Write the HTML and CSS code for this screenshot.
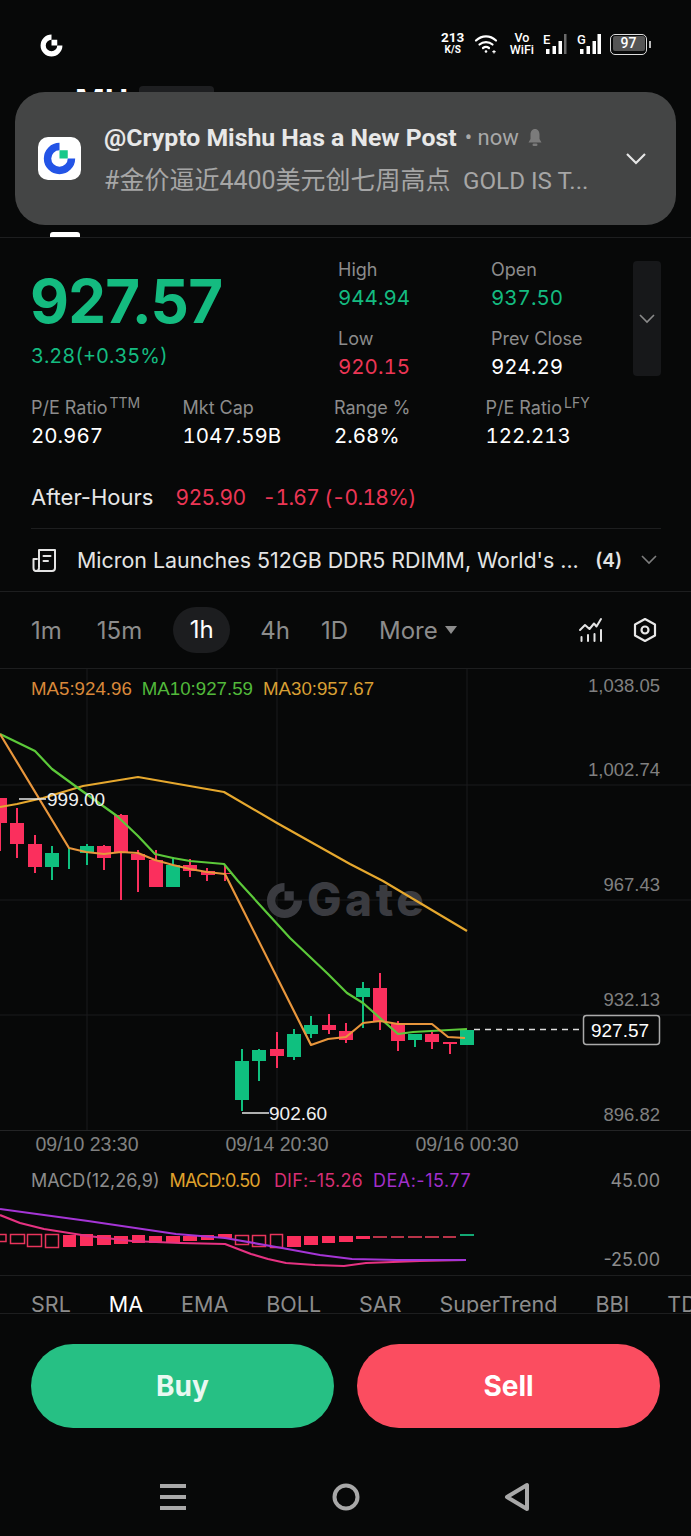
FILE: index.html
```html
<!DOCTYPE html>
<html lang="en">
<head>
    <meta charset="UTF-8">
    <meta name="viewport" content="width=device-width, initial-scale=1.0">
    <title>MU - Quote</title>
    <link rel="stylesheet" href="styles.css">
</head>
<body>

<svg class="defs" width="0" height="0">
    <symbol id="gate-mark" viewBox="0 0 40 40">
        <path d="M20 1A19 19 0 1 0 39 20H30A10 10 0 1 1 20 10Z"/>
        <rect class="gate-dot" x="20" y="10" width="10" height="10"/>
    </symbol>
</svg>

<div class="phone">

    <!-- status bar -->
    <div class="status">
        <svg class="status-logo"><use href="#gate-mark"/></svg>
        <div class="status-right">
            <div class="speed"><b>213</b><span>K/S</span></div>
            <svg class="wifi" width="24" height="20" viewBox="0 0 24 20" fill="none" stroke="#fff" stroke-width="2.2" stroke-linecap="round">
                <path d="M2 6.5C8 1 16 1 22 6.5"/>
                <path d="M5.5 10.5C9 7.3 15 7.3 18.500 10.500"/>
                <path d="M9 14C10.800 12.700 13.200 12.700 15 14"/>
                <circle cx="12" cy="17.500" r="1.300" fill="#fff" stroke="none"/>
                <path d="M20 16.500v2.500M18.800 17.700h2.400" stroke-width="1.200"/>
            </svg>
            <div class="vowifi"><span>Vo</span><span>WiFi</span></div>
            <div class="sim">
                <span>E</span>
                <svg width="21" height="20" viewBox="0 0 21 20" fill="#fff">
                    <rect x="0" y="15" width="3.500" height="5"/><rect x="6.500" y="12" width="3.500" height="8"/><rect x="12.500" y="7" width="3.500" height="13"/><rect x="18" y="0" width="2.500" height="20" fill="#6a6a6a"/>
                </svg>
            </div>
            <div class="sim sim-g">
                <span>G</span>
                <svg width="21" height="20" viewBox="0 0 21 20" fill="#fff">
                    <rect x="0" y="15" width="3.500" height="5"/><rect x="6.500" y="12" width="3.500" height="8"/><rect x="12.500" y="7" width="3.500" height="13"/><rect x="17.500" y="0" width="3.500" height="20"/>
                </svg>
            </div>
            <div class="battery"><span>97</span></div>
            <div class="battery-tip"></div>
        </div>
    </div>

    <!-- page header, mostly behind the notification -->
    <div class="header">
        <div class="header-row">
            <span class="ticker">MU</span>
            <span class="ticker-tag"></span>
        </div>
        <div class="tab-mark"></div>
    </div>

    <div class="notice">
        <div class="notice-icon"><svg class="notice-logo"><use href="#gate-mark"/></svg></div>
        <div class="notice-body">
            <div class="notice-title">
                <b>@Crypto Mishu Has a New Post</b>
                <span>• now</span>
                <svg width="16" height="19" viewBox="0 0 16 19" fill="#7b7b7b">
                    <path d="M8 1C5 1 3.500 3.500 3.500 6.500V11L1.500 14.500H14.500L12.500 11V6.500C12.500 3.500 11 1 8 1Z"/>
                    <rect x="5.500" y="15.500" width="5" height="2.500" rx="1.200"/>
                </svg>
            </div>
            <div class="notice-text">#金价逼近4400美元创七周高点&nbsp; <span class="notice-latin">GOLD IS T...</span></div>
        </div>
        <svg class="notice-arrow" width="20" height="12" viewBox="0 0 20 12" fill="none" stroke="#e6e6e6" stroke-width="2.200">
            <path d="M1 1L10 10L19 1"/>
        </svg>
    </div>

    <!-- quote -->
    <div class="quote">
        <div class="quote-top">
            <div class="quote-price">
                <div class="last">927.57</div>
                <div class="change">3.28(+0.35%)</div>
            </div>
            <div class="quote-grid">
                <div class="cell"><label>High</label><span class="up">944.94</span></div>
                <div class="cell"><label>Open</label><span class="up">937.50</span></div>
                <div class="cell"><label>Low</label><span class="down">920.15</span></div>
                <div class="cell"><label>Prev Close</label><span>924.29</span></div>
            </div>
            <div class="quote-more">
                <svg width="16" height="10" viewBox="0 0 16 10" fill="none" stroke="#8a8a8a" stroke-width="1.600"><path d="M1 1L8 8L15 1"/></svg>
            </div>
        </div>
        <div class="stats">
            <div class="cell"><label>P/E Ratio<sup>TTM</sup></label><span>20.967</span></div>
            <div class="cell"><label>Mkt Cap</label><span>1047.59B</span></div>
            <div class="cell"><label>Range %</label><span>2.68%</span></div>
            <div class="cell"><label>P/E Ratio<sup>LFY</sup></label><span>122.213</span></div>
        </div>
        <div class="after">
            <span class="after-label">After-Hours</span>
            <span class="down">925.90</span>
            <span class="down after-change">-1.67 (-0.18%)</span>
        </div>
    </div>

    <div class="news">
        <svg width="26" height="26" viewBox="0 0 26 26" fill="none" stroke="#e4e4e4" stroke-width="2" stroke-linejoin="round" stroke-linecap="round">
            <path d="M7 20V3H23V21C23 23 22 24 20 24H4C2 24 1.500 22.500 1.500 21V12H5"/>
            <path d="M7 21C7 23 6 24 4 24"/>
            <path d="M11.500 9H18.500M11.500 14H16"/>
        </svg>
        <span class="news-text">Micron Launches 512GB DDR5 RDIMM, World's ...</span>
        <span class="news-count">(4)</span>
        <svg width="16" height="10" viewBox="0 0 16 10" fill="none" stroke="#7d7d7d" stroke-width="1.600"><path d="M1 1L8 8L15 1"/></svg>
    </div>

    <!-- timeframes -->
    <div class="periods">
        <span class="period">1m</span>
        <span class="period">15m</span>
        <span class="period period-on">1h</span>
        <span class="period">4h</span>
        <span class="period">1D</span>
        <span class="period period-more">More<i class="caret"></i></span>
        <div class="period-tools">
            <svg width="26" height="26" viewBox="0 0 26 26" fill="none" stroke="#e4e4e4" stroke-width="2" stroke-linecap="round" stroke-linejoin="round">
                <path d="M2 13L7 8L11.500 12L16 6.500L18.500 9.500L23 2"/>
                <path d="M3.500 20V24M10 18V24M16.500 17V24M23 13V24"/>
            </svg>
            <svg width="24" height="26" viewBox="0 0 24 26" fill="none" stroke="#e8e8e8" stroke-width="2.200" stroke-linejoin="round">
                <path d="M12 2L22 7.500V18.500L12 24L2 18.500V7.500Z"/>
                <circle cx="12" cy="13" r="3.500"/>
            </svg>
        </div>
    </div>

    <!-- main chart -->
    <svg class="chart" width="691" height="492" viewBox="0 668 691 492">
        <g class="grid">
            <path d="M0 784H691M0 899H691M0 1014H691M87 668V1129M277 668V1129M467 668V1129"/>
            <path class="grid-base" d="M0 1129.500H691"/>
        </g>

        <g class="mark-faded">
            <use href="#gate-mark" x="266" y="881" width="37" height="37"/>
            <text x="307" y="915" class="mark-word">Gate</text>
        </g>

        <g class="candle-down">
            <rect x="0" y="797" width="7" height="25"/><rect x="-1" y="797" width="2" height="53"/>
            <rect x="10" y="822" width="14" height="21"/><rect x="16" y="807" width="2" height="50"/>
            <rect x="28" y="843" width="14" height="23"/><rect x="34" y="834" width="2" height="38"/>
            <rect x="97" y="845" width="14" height="12"/><rect x="103" y="844" width="2" height="25"/>
            <rect x="114" y="814" width="14" height="38"/><rect x="120" y="813" width="2" height="86"/>
            <rect x="131" y="853" width="14" height="6"/><rect x="137" y="849" width="2" height="42"/>
            <rect x="149" y="859" width="14" height="27"/><rect x="155" y="849" width="2" height="37"/>
            <rect x="183" y="864" width="14" height="6"/><rect x="189" y="858" width="2" height="18"/>
            <rect x="201" y="870" width="14" height="4"/><rect x="206" y="867" width="2" height="13"/>
            <rect x="218" y="872" width="14" height="1"/><rect x="224" y="865" width="2" height="15"/>
            <rect x="270" y="1048" width="14" height="7"/><rect x="276" y="1031" width="2" height="36"/>
            <rect x="322" y="1024" width="14" height="5"/><rect x="328" y="1013" width="2" height="20"/>
            <rect x="339" y="1030" width="14" height="9"/><rect x="345" y="1022" width="2" height="20"/>
            <rect x="373" y="987" width="14" height="34"/><rect x="379" y="972" width="2" height="57"/>
            <rect x="391" y="1023" width="14" height="17"/><rect x="397" y="1020" width="2" height="30"/>
            <rect x="425" y="1033" width="14" height="8"/><rect x="431" y="1031" width="2" height="17"/>
            <rect x="443" y="1041" width="14" height="2"/><rect x="449" y="1041" width="2" height="12"/>
        </g>
        <g class="candle-up">
            <rect x="45" y="852" width="14" height="14"/><rect x="51" y="845" width="2" height="34"/>
            <rect x="68" y="847" width="2" height="21"/>
            <rect x="80" y="845" width="14" height="7"/><rect x="86" y="843" width="2" height="21"/>
            <rect x="166" y="864" width="14" height="22"/><rect x="172" y="856" width="2" height="30"/>
            <rect x="235" y="1060" width="14" height="39"/><rect x="241" y="1048" width="2" height="62"/>
            <rect x="252" y="1049" width="14" height="11"/><rect x="258" y="1048" width="2" height="32"/>
            <rect x="287" y="1033" width="14" height="23"/><rect x="293" y="1028" width="2" height="31"/>
            <rect x="304" y="1024" width="14" height="9"/><rect x="310" y="1015" width="2" height="22"/>
            <rect x="356" y="987" width="14" height="9"/><rect x="362" y="981" width="2" height="46"/>
            <rect x="408" y="1033" width="14" height="6"/><rect x="414" y="1033" width="2" height="13"/>
            <rect x="460" y="1029" width="14" height="15"/>
        </g>

        <polyline class="ma30" points="0,806 17,803 43,797 83,785 138,776 224,791 277,822 350,863 383,880 467,930"/>
        <polyline class="ma10" points="0,733 35,750 52,768 78,787 117,815 138,835 155,853 173,857 190,860 224,863 238,880 290,937 328,973 347,992 363,1002 398,1033 413,1031 467,1028"/>
        <polyline class="ma5" points="0,733 69,847 86,851 104,853 121,851 138,852 155,859 173,864 190,868 207,871 225,873 311,1044 328,1038 346,1036 363,1022 380,1020 398,1023 432,1023 448,1036 465,1037"/>

        <path class="note-line" d="M19 798H46M242 1112H269"/>
        <text x="47" y="805" class="note">999.00</text>
        <text x="269" y="1119" class="note">902.60</text>

        <path class="last-line" d="M474 1028.500H583"/>
        <rect class="last-box" x="583.500" y="1014.500" width="76" height="29" rx="3"/>
        <text x="620" y="1036" class="last-text">927.57</text>

        <text x="31" y="694" class="legend"><tspan class="c-ma5">MA5:924.96</tspan><tspan class="c-ma10" dx="10">MA10:927.59</tspan><tspan class="c-ma30" dx="10">MA30:957.67</tspan></text>

        <g class="axis">
            <text x="660" y="691">1,038.05</text>
            <text x="660" y="775">1,002.74</text>
            <text x="660" y="890">967.43</text>
            <text x="660" y="1005">932.13</text>
            <text x="660" y="1120">896.82</text>
        </g>
        <g class="dates">
            <text x="87" y="1150">09/10 23:30</text>
            <text x="277" y="1150">09/14 20:30</text>
            <text x="467" y="1150">09/16 00:30</text>
        </g>
    </svg>

    <!-- macd pane -->
    <div class="macd">
        <div class="macd-head">
            <span class="macd-name">MACD(12,26,9)</span>
            <span class="c-macd">MACD:0.50</span>
            <span class="c-dif">DIF:-15.26</span>
            <span class="c-dea">DEA:-15.77</span>
            <span class="macd-top">45.00</span>
        </div>
        <svg class="macd-plot" width="691" height="115" viewBox="0 1160 691 115">
            <g class="bar-hollow">
                <rect x="-7" y="1233.500" width="13" height="7"/>
                <rect x="10.500" y="1233.500" width="14" height="9"/>
                <rect x="27.500" y="1233.500" width="14" height="12"/>
                <rect x="45.500" y="1233.500" width="13" height="13"/>
                <rect x="235.500" y="1234.500" width="13" height="9"/>
                <rect x="252.500" y="1234.500" width="13" height="11"/>
                <rect x="270.500" y="1233.500" width="12" height="13"/>
            </g>
            <g class="bar-solid">
                <rect x="63" y="1234" width="13" height="12"/>
                <rect x="80" y="1233" width="13" height="12"/>
                <rect x="97" y="1234" width="14" height="10"/>
                <rect x="114" y="1235" width="14" height="8"/>
                <rect x="132" y="1234" width="13" height="8"/>
                <rect x="149" y="1235" width="13" height="7"/>
                <rect x="166" y="1235" width="14" height="6"/>
                <rect x="183" y="1235" width="14" height="5"/>
                <rect x="201" y="1234" width="13" height="5"/>
                <rect x="218" y="1233" width="14" height="4"/>
                <rect x="287" y="1235" width="14" height="11"/>
                <rect x="304" y="1235" width="14" height="9"/>
                <rect x="322" y="1235" width="13" height="7"/>
                <rect x="339" y="1235" width="14" height="6"/>
                <rect x="356" y="1235" width="14" height="3"/>
            </g>
            <g class="bar-thin">
                <rect x="373" y="1235" width="14" height="2"/>
                <rect x="391" y="1235" width="13" height="2"/>
                <rect x="408" y="1235" width="14" height="2"/>
                <rect x="425" y="1235" width="14" height="2"/>
                <rect x="443" y="1235" width="13" height="2"/>
            </g>
            <rect class="bar-last" x="460" y="1233" width="14" height="2"/>
            <polyline class="dif" points="0,1214 20,1222 44,1228 88,1235 132,1240 180,1242 225,1243 238,1248 251,1253 268,1258 286,1262 315,1264 344,1265 366,1262 420,1260 466,1259"/>
            <polyline class="dea" points="0,1208 88,1220 176,1233 225,1237 282,1247 320,1254 352,1258 397,1259 466,1259"/>
            <text x="660" y="1265" class="macd-low">-25.00</text>
        </svg>
    </div>

    <div class="indicators">
        <span>SRL</span>
        <span class="ind-on">MA</span>
        <span>EMA</span>
        <span>BOLL</span>
        <span>SAR</span>
        <span>SuperTrend</span>
        <span>BBI</span>
        <span>TD</span>
    </div>

    <div class="trade">
        <button class="btn btn-buy">Buy</button>
        <button class="btn btn-sell">Sell</button>
    </div>

    <div class="navbar">
        <svg width="28" height="28" viewBox="0 0 28 28" fill="#a8a8a8">
            <rect x="1" y="1" width="26" height="4"/><rect x="1" y="12" width="26" height="4"/><rect x="1" y="23" width="26" height="4"/>
        </svg>
        <svg width="28" height="28" viewBox="0 0 28 28" fill="none" stroke="#a8a8a8" stroke-width="4">
            <circle cx="14" cy="14" r="11.500"/>
        </svg>
        <svg width="26" height="30" viewBox="0 0 26 30" fill="none" stroke="#a8a8a8" stroke-width="4" stroke-linejoin="round">
            <path d="M3 15L23 3V27Z"/>
        </svg>
    </div>

</div>

</body>
</html>
```

FILE: styles.css
```css
/* base */
:root {
    --bg: #070808;
    --green: #14bb80;
    --red: #ec3655;
    --grey: #8c8c8c;
    --line: #1d1e1f;
}

* { box-sizing: border-box; }

body {
    margin: 0;
    background: var(--bg);
    color: #fff;
    font-family: Inter, sans-serif;
}

.defs { position: absolute; }
.gate-dot { fill: var(--dot, currentColor); }

.phone {
    position: relative;
    width: 691px;
    height: 1536px;
    overflow: hidden;
}

.up { color: var(--green); }
.down { color: var(--red); }

/* status bar */
.status {
    height: 86px;
    padding: 29px 40px 0;
    display: flex;
    justify-content: space-between;
    align-items: flex-start;
}

.status-logo {
    width: 23px;
    height: 23px;
    margin-top: 5px;
    fill: #fff;
    --dot: #fff;
}

.status-right {
    display: flex;
    align-items: center;
    height: 30px;
    font-family: Roboto, sans-serif;
    color: #fff;
}

.speed {
    display: flex;
    flex-direction: column;
    align-items: center;
    width: 24px;
    margin-top: -3px;
    font-size: 13.500px;
}
.speed b { font-weight: 700; line-height: 13px; }
.speed span { font-size: 10px; font-weight: 700; line-height: 11px; }

.wifi { margin-left: 9px; }

.vowifi {
    display: flex;
    flex-direction: column;
    margin-left: 12px;
    font-size: 12.500px;
    font-weight: 500;
    line-height: 12px;
    text-align: center;
}

.sim {
    display: flex;
    align-items: flex-start;
    margin-left: 9px;
    font-size: 13px;
    font-weight: 500;
    line-height: 12px;
}
.sim span { width: 3px; }
.sim svg { display: block; }
.sim-g { margin-left: 10px; }

.battery {
    margin-left: 9px;
    width: 37px;
    height: 21px;
    border: 1.500px solid #ddd;
    border-radius: 5px;
    padding: 1.500px;
}
.battery span {
    display: block;
    height: 15px;
    background: #555;
    border-radius: 2px;
    font-size: 14px;
    line-height: 15px;
    text-align: center;
    font-weight: 500;
}
.battery-tip {
    width: 2px;
    height: 7px;
    margin-left: 2px;
    background: #bbb;
}

/* header behind the notification */
.header {
    height: 152px;
    border-bottom: 1px solid var(--line);
    display: flex;
    flex-direction: column;
    justify-content: space-between;
}

.header-row {
    display: flex;
    gap: 11px;
    padding-left: 75px;
}

.ticker {
    font-size: 32px;
    font-weight: 700;
    line-height: 31px;
}

.ticker-tag {
    width: 75px;
    height: 30px;
    background: #1e1f21;
    border-radius: 4px;
}

.tab-mark {
    width: 30px;
    height: 5px;
    margin-left: 50px;
    background: #fff;
    border-radius: 3px 3px 0 0;
}

/* notification */
.notice {
    position: absolute;
    left: 15px;
    top: 92px;
    width: 661px;
    height: 133px;
    background: #444545;
    border-radius: 30px;
    display: flex;
    align-items: center;
    padding: 0 30px 0 23px;
}

.notice-icon {
    width: 43px;
    height: 43px;
    background: #fff;
    border-radius: 10px;
    display: flex;
    align-items: center;
    justify-content: center;
    flex-shrink: 0;
}

.notice-logo {
    width: 33px;
    height: 33px;
    fill: #2354e6;
    --dot: #17c88b;
}

.notice-body {
    flex: 1;
    margin-left: 23px;
    font-family: Roboto, "Noto Sans CJK SC", sans-serif;
}

.notice-title {
    display: flex;
    align-items: center;
    gap: 8px;
    height: 38px;
}
.notice-title b {
    font-size: 24.800px;
    font-weight: 700;
    color: #e8e8e8;
}
.notice-title span {
    font-size: 22px;
    color: #a8a8a8;
}

.notice-text {
    margin-top: 6px;
    font-size: 25px;
    line-height: 36px;
    color: #a6a6a6;
    white-space: nowrap;
}
.notice-latin { font-size: 24.200px; }

/* quote block */
.quote {
    padding: 0 30px 0 31px;
}

.quote-top {
    display: flex;
    height: 139px;
    padding-top: 21px;
}

.quote-price {
    width: 307px;
}

.last {
    font-size: 60px;
    font-weight: 700;
    line-height: 72px;
    letter-spacing: -0.800px;
    color: var(--green);
    margin: 6px 0 0 -1px;
}

.change {
    margin-top: 6px;
    font-size: 20px;
    line-height: 26px;
    color: var(--green);
    font-variant-numeric: tabular-nums;
}

.quote-grid {
    display: grid;
    grid-template-columns: 153px 142px;
    grid-auto-rows: 69px;
}

.cell {
    display: flex;
    flex-direction: column;
}

.cell label {
    font-size: 18px;
    line-height: 22px;
    color: var(--grey);
}

.cell span {
    margin-top: 4px;
    font-size: 20.500px;
    line-height: 26px;
    font-variant-numeric: tabular-nums;
}

.quote-more {
    width: 28px;
    height: 115px;
    margin-top: 2px;
    background: #17181a;
    border-radius: 4px;
    display: flex;
    align-items: center;
    justify-content: center;
}

.stats {
    display: grid;
    grid-template-columns: repeat(4, 151.500px);
    height: 85px;
    padding-top: 20px;
}

.stats sup {
    font-size: 14px;
    line-height: 0;
    margin-left: 2px;
    vertical-align: 6px;
}

.after {
    display: flex;
    align-items: center;
    gap: 16.500px;
    height: 67px;
    padding-top: 4px;
    border-bottom: 1px solid var(--line);
    font-size: 21px;
}
.after-label { margin-right: 6px; font-size: 22px; color: #e6e6e6; }
.after-change { font-variant-numeric: tabular-nums; letter-spacing: -0.700px; }

/* news line */
.news {
    height: 63px;
    padding: 0 34px 0 32px;
    display: flex;
    align-items: center;
    border-bottom: 1px solid var(--line);
}

.news-text {
    flex: 1;
    margin-left: 19px;
    font-size: 21.400px;
    color: #e4e4e4;
    white-space: nowrap;
}

.news-count {
    margin-right: 19px;
    font-size: 19px;
    font-weight: 600;
    color: #e4e4e4;
}

/* timeframes */
.periods {
    height: 77px;
    padding: 0 31px;
    display: flex;
    align-items: center;
    border-bottom: 1px solid var(--line);
}

.period {
    font-size: 24px;
    color: var(--grey);
    margin-right: 31px;
}
.period:first-child { margin-right: 35px; }

.period-on {
    width: 57px;
    height: 46px;
    margin: 0 30px 0 0;
    background: #1c1d1f;
    border-radius: 23px;
    color: #fff;
    line-height: 46px;
    text-align: center;
}

.period-more {
    display: flex;
    align-items: center;
    margin: 0;
}

.caret {
    margin-left: 7px;
    border-left: 6px solid transparent;
    border-right: 6px solid transparent;
    border-top: 8px solid var(--grey);
}

.period-tools {
    margin-left: auto;
    display: flex;
    align-items: center;
    gap: 29px;
    padding-right: 3px;
}

/* chart */
.chart {
    display: block;
    font-family: "Liberation Sans", sans-serif;
}

.grid path { stroke: #1a1b1c; stroke-width: 1; fill: none; }
.grid .grid-base { stroke: #232425; }

.mark-faded { fill: #3a3b40; --dot: #3a3b40; }
.mark-word { font-family: Inter, sans-serif; font-size: 46px; font-weight: 800; letter-spacing: 3.500px; }

.candle-down { fill: #fb2f5d; }
.candle-up { fill: #0fc07f; }

.chart polyline, .macd-plot polyline { fill: none; stroke-width: 2.200; stroke-linejoin: round; }
.ma5 { stroke: #e8963c; }
.ma10 { stroke: #5cc93a; }
.ma30 { stroke: #e6a82e; }

.note-line { stroke: #e6e6e6; stroke-width: 1.500; fill: none; }
.note { font-size: 19px; fill: #f0f0f0; }

.last-line { stroke: #ddd; stroke-width: 1.500; stroke-dasharray: 6 5; }
.last-box { fill: var(--bg); stroke: #aaa; stroke-width: 1.500; }
.last-text { font-size: 19px; fill: #fff; text-anchor: middle; }

.legend { font-size: 18.700px; }
.c-ma5 { fill: #d9883a; }
.c-ma10 { fill: #52b93b; }
.c-ma30 { fill: #d89f34; }

.axis text { font-size: 18.500px; fill: #808080; text-anchor: end; }
.dates text { font-size: 19.500px; fill: #808080; text-anchor: middle; }

/* macd */
.macd {
    position: relative;
    height: 115px;
    border-bottom: 1px solid var(--line);
}

.macd-head {
    position: absolute;
    left: 31px;
    right: 31px;
    top: 9px;
    display: flex;
    gap: 10px;
    font-size: 18px;
    line-height: 22px;
}
.macd-name { color: var(--grey); }
.c-macd { color: #e0a22c; letter-spacing: -0.800px; }
.c-dif { margin-left: 4px; color: #d62f74; letter-spacing: 0.200px; }
.c-dea { color: #a12fcb; letter-spacing: 0.500px; }
.macd-top { margin-left: auto; color: var(--grey); }

.macd-plot { display: block; font-family: Inter, sans-serif; }
.macd-low { font-size: 18px; fill: var(--grey); text-anchor: end; }

.bar-hollow { fill: none; stroke: #e8345c; stroke-width: 1.500; }
.bar-solid { fill: #fb2f5d; }
.bar-thin { fill: #b83348; }
.bar-last { fill: #12a873; }
.dif { stroke: #e63282; }
.dea { stroke: #a535d6; stroke-width: 2.500; }

/* indicators */
.indicators {
    height: 44px;
    padding: 15px 0 0 31px;
    display: flex;
    gap: 38px;
    overflow-x: clip;
    font-size: 21.500px;
    line-height: 26px;
    color: var(--grey);
    white-space: nowrap;
}
.ind-on { color: #fff; }

/* buy sell - the top edge sits over the foot of the row above */
.trade {
    position: relative;
    display: flex;
    gap: 23px;
    margin-top: -7px;
    padding: 30px 31px 0;
    border-top: 1px solid var(--line);
    background: var(--bg);
}

.btn {
    flex: 1;
    height: 84px;
    border: 0;
    border-radius: 42px;
    color: #fff;
    font-family: Inter, sans-serif;
    font-size: 28px;
    font-weight: 700;
}
.btn-buy { background: #26c084; color: #e9f8f1; }
.btn-sell { background: #fb4d60; }

/* android nav */
.navbar {
    margin-top: 54px;
    padding: 0 161px 0 159px;
    display: flex;
    justify-content: space-between;
    align-items: center;
}
```
